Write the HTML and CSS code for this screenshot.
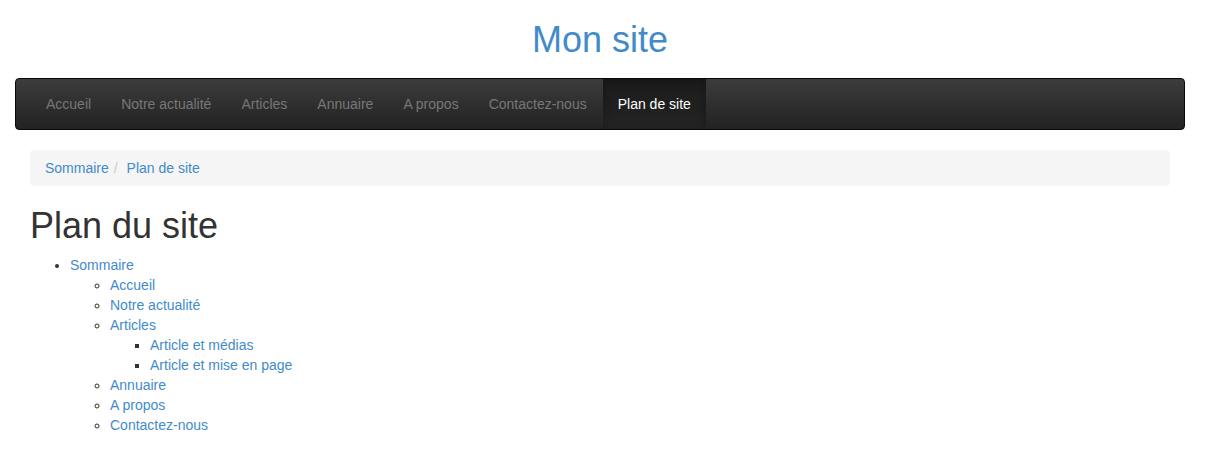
FILE: index.html
```html
<!DOCTYPE html>
<html lang="fr">
<head>
<meta charset="utf-8">
<title>Plan du site</title>
<link rel="stylesheet" href="styles.css">
</head>
<body>
<div class="container">
  <header class="site-header">
    <h1 class="site-title"><a href="#">Mon site</a></h1>
  </header>
  <nav class="navbar">
    <ul class="nav">
      <li><a href="#">Accueil</a></li>
      <li><a href="#">Notre actualité</a></li>
      <li><a href="#">Articles</a></li>
      <li><a href="#">Annuaire</a></li>
      <li><a href="#">A propos</a></li>
      <li><a href="#">Contactez-nous</a></li>
      <li class="active"><a href="#">Plan de site</a></li>
    </ul>
  </nav>
  <div class="content">
    <ol class="breadcrumb">
      <li><a href="#">Sommaire</a></li>
      <li><a href="#">Plan de site</a></li>
    </ol>
    <h1 class="page-title">Plan du site</h1>
    <ul class="plan">
      <li><a href="#">Sommaire</a>
        <ul>
          <li><a href="#">Accueil</a></li>
          <li><a href="#">Notre actualité</a></li>
          <li><a href="#">Articles</a>
            <ul>
              <li><a href="#">Article et médias</a></li>
              <li><a href="#">Article et mise en page</a></li>
            </ul>
          </li>
          <li><a href="#">Annuaire</a></li>
          <li><a href="#">A propos</a></li>
          <li><a href="#">Contactez-nous</a></li>
        </ul>
      </li>
    </ul>
  </div>
</div>
</body>
</html>
```
FILE: styles.css
```css
* { box-sizing: border-box; }
html, body { margin: 0; padding: 0; }
body {
  font-family: "Liberation Sans", Arial, Helvetica, sans-serif;
  font-size: 14px;
  line-height: 20px;
  color: #333;
  background: #fff;
}
a { color: #428bca; text-decoration: none; }

.container {
  width: 1170px;
  margin-left: 15px;
}

.site-header { padding-bottom: 18.4px; }
.site-title {
  margin: 20px 0 0;
  font-size: 36px;
  line-height: 39.6px;
  font-weight: 500;
  text-align: center;
}
.site-title a { color: #428bca; }

.navbar {
  min-height: 52px;
  margin-bottom: 20px;
  border: 1px solid #080808;
  border-radius: 4px;
  background-image: linear-gradient(to bottom, #3c3c3c 0%, #222 100%);
  padding: 0 15px;
  overflow: hidden;
}
.nav {
  display: flex;
  list-style: none;
  margin: 0;
  padding: 0;
}
.nav a {
  display: block;
  padding: 15px;
  line-height: 20px;
  color: #777;
}
.nav .active {
  margin-left: 1px;
}
.nav .active a {
  color: #fff;
  background-image: linear-gradient(to bottom, #1c1c1c 0%, #232323 100%);
  box-shadow: inset 0 3px 9px rgba(0,0,0,.25);
}

.content { padding: 0 15px; }

.breadcrumb {
  display: flex;
  list-style: none;
  margin: 0 0 20px;
  padding: 8px 15px;
  background: #f5f5f5;
  border-radius: 4px;
}
.breadcrumb li + li::before {
  content: "/\00a0";
  padding: 0 5px;
  color: #ccc;
}

.page-title {
  margin: 20px 0 9px;
  font-size: 36px;
  line-height: 39.6px;
  font-weight: 500;
  color: #333;
}

.plan {
  margin: 0 0 10px;
  padding-left: 40px;
}
.plan ul {
  margin: 0;
  padding-left: 40px;
}
```
